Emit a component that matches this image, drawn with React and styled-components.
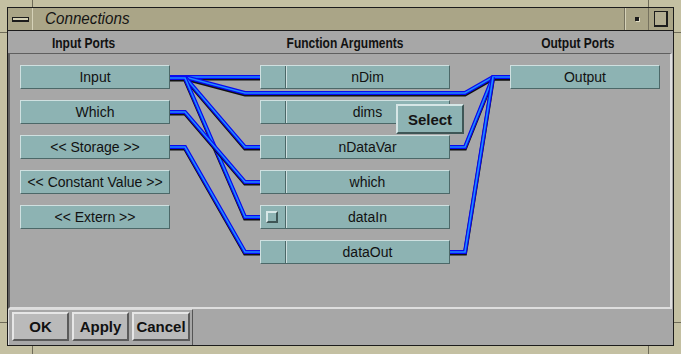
import React from "react";
import styled, { createGlobalStyle } from "styled-components";

const GlobalStyle = createGlobalStyle`
  html, body {
    margin: 0;
    padding: 0;
    background: #c4c0a2;
  }
  * {
    box-sizing: border-box;
  }
`;

const FRAME = "#c4c0a2";
const TICK = "#6e6b58";

const Window = styled.div`
  width: 681px;
  height: 354px;
  padding: 7px 7px 8px 7px;
  display: flex;
  font-family: "Liberation Sans", Arial, sans-serif;
  background:
    linear-gradient(${TICK}, ${TICK}) 32px 0 / 1px 7px no-repeat,
    linear-gradient(${TICK}, ${TICK}) 648px 0 / 1px 7px no-repeat,
    linear-gradient(${TICK}, ${TICK}) 32px 346px / 1px 8px no-repeat,
    linear-gradient(${TICK}, ${TICK}) 648px 346px / 1px 8px no-repeat,
    linear-gradient(${TICK}, ${TICK}) 0 32px / 7px 1px no-repeat,
    linear-gradient(${TICK}, ${TICK}) 0 322px / 7px 1px no-repeat,
    linear-gradient(${TICK}, ${TICK}) 674px 32px / 7px 1px no-repeat,
    linear-gradient(${TICK}, ${TICK}) 674px 322px / 7px 1px no-repeat,
    ${FRAME};
`;

const Inner = styled.div`
  flex: 1;
  display: flex;
  flex-direction: column;
  border: 1px solid #1c1c1c;
`;

const TitleBar = styled.div`
  height: 23px;
  display: flex;
  background: #aaa587;
  border-bottom: 1px solid #1c1c1c;
`;

const TitleButton = styled.div`
  width: ${p => p.$w}px;
  display: flex;
  align-items: center;
  justify-content: center;
  border-left: ${p => (p.$left ? "1px solid #76725e" : "none")};
  border-right: ${p => (p.$right ? "1px solid #76725e" : "none")};
  box-shadow: ${p => (p.$left ? "inset 1px 0 0 #d6d2b8" : "none")};
`;

const MenuSlab = styled.div`
  width: 17px;
  height: 5px;
  background: #d4d0b4;
  border: 1px solid #1c1c1c;
  border-bottom-width: 2px;
`;

const MinDot = styled.div`
  width: 4px;
  height: 4px;
  background: #1c1c1c;
  box-shadow: 1px 1px 0 #e0dcc4;
`;

const MaxBox = styled.div`
  width: 14px;
  height: 16px;
  border: 1px solid #1c1c1c;
  border-right-width: 2px;
  border-bottom-width: 2px;
  background: #b3ae92;
`;

const Title = styled.div`
  flex: 1;
  padding-left: 13px;
  display: flex;
  align-items: center;
  font-style: italic;
  font-size: 16px;
  color: #141414;
  box-shadow: inset 1px 0 0 #d6d2b8;

  span {
    display: inline-block;
    transform: scaleX(0.95);
    transform-origin: left center;
  }
`;

const Body = styled.div`
  flex: 1;
  display: flex;
  flex-direction: column;
  background: #a7a7a7;
`;

const HeaderRow = styled.div`
  height: 22px;
  display: flex;
  align-items: center;
`;

const Header = styled.div`
  width: ${p => p.$w}px;
  text-align: center;
  font-weight: 700;
  font-size: 15px;
  color: #111;

  span {
    display: inline-block;
    transform: scaleX(0.8);
  }
`;

const Panel = styled.div`
  position: relative;
  height: 256px;
  margin-right: 1px;
  padding: 11px 10px 10px 10px;
  border: solid;
  border-color: #5f5f5f #dedede #dedede #5f5f5f;
  border-width: 1px 2px 2px 2px;
`;

const Wires = styled.svg`
  position: absolute;
  left: 0;
  top: 0;
  width: 100%;
  height: 100%;
  pointer-events: none;
`;

const Columns = styled.div`
  position: relative;
  display: flex;
  align-items: flex-start;
`;

const Column = styled.div`
  width: ${p => p.$w}px;
  margin-right: ${p => p.$gap || 0}px;
  display: flex;
  flex-direction: column;
  gap: 11px;
`;

const PortButton = styled.div`
  height: 24px;
  display: flex;
  align-items: center;
  justify-content: center;
  background: #8db3b3;
  border: 1px solid;
  border-color: #cfe0e0 #4c6868 #4c6868 #cfe0e0;
  font-size: 14px;
  color: #111;
`;

const ArgButton = styled(PortButton)`
  justify-content: flex-start;
`;

const Slot = styled.div`
  width: 25px;
  height: 100%;
  display: flex;
  align-items: center;
  padding-left: 5px;
  border-right: 1px solid #4c6868;
  box-shadow: 1px 0 0 #cfe0e0;
`;

const Check = styled.div`
  width: 12px;
  height: 12px;
  background: #8db3b3;
  border: 2px solid;
  border-color: #d8e8e8 #3e5656 #3e5656 #d8e8e8;
`;

const ArgLabel = styled.div`
  flex: 1;
  text-align: center;
`;

const SelectPopup = styled.div`
  position: absolute;
  left: 386px;
  top: 50px;
  width: 68px;
  height: 30px;
  display: flex;
  align-items: center;
  justify-content: center;
  background: #8db3b3;
  border: 2px solid;
  border-color: #d6e6e6 #3e5656 #3e5656 #d6e6e6;
  font-weight: 700;
  font-size: 15px;
  color: #141414;
`;

const Footer = styled.div`
  flex: 1;
  display: flex;
`;

const ButtonGroup = styled.div`
  display: flex;
  gap: 3px;
  padding: 2px 2px 3px 3px;
  border-top: 1px solid #dadada;
  border-left: 1px solid #dadada;
  border-right: 1px solid #555;
`;

const DialogButton = styled.button`
  width: ${p => p.$w}px;
  height: 29px;
  padding: 0;
  background: #bababa;
  border: 2px solid;
  border-color: #e6e6e6 #5a5a5a #5a5a5a #e6e6e6;
  font-family: "Liberation Sans", Arial, sans-serif;
  font-weight: 700;
  font-size: 15px;
  color: #111;
`;

const Wire = ({ d }) => (
  <g fill="none" strokeLinejoin="miter">
    <path d={d} stroke="#111" strokeWidth="4" transform="translate(0 1.5)" />
    <path d={d} stroke="#0a0af0" strokeWidth="4" />
    <path d={d} stroke="#1e8cff" strokeWidth="1.6" />
  </g>
);

const wires = [
  "M170 77 H260",
  "M170 77 H185 L245 93 H465 L493 77 H510",
  "M170 77 H185 L245 147 H260",
  "M170 78 H185 L245 217 H260",
  "M170 112 H185 L245 182 H260",
  "M170 147 H185 L245 252 H260",
  "M450 147 H465 L493 77 H510",
  "M450 252 H465 L493 77",
];

const inputs = ["Input", "Which", "<< Storage >>", "<< Constant Value >>", "<< Extern >>"];
const args = ["nDim", "dims", "nDataVar", "which", "dataIn", "dataOut"];

export default function App() {
  return (
    <>
      <GlobalStyle />
      <Window>
        <Inner>
          <TitleBar>
            <TitleButton $w={24}>
              <MenuSlab />
            </TitleButton>
            <Title><span>Connections</span></Title>
            <TitleButton $w={25} $left $right>
              <MinDot />
            </TitleButton>
            <TitleButton $w={24}>
              <MaxBox />
            </TitleButton>
          </TitleBar>
          <Body>
            <HeaderRow>
              <Header $w={152}><span>Input Ports</span></Header>
              <Header $w={370}><span>Function Arguments</span></Header>
              <Header $w={96}><span>Output Ports</span></Header>
            </HeaderRow>
            <Panel>
              <Wires>
                <g transform="translate(-10 -54)">
                  {wires.map((d, i) => (
                    <Wire key={`wire-${i}`} d={d} />
                  ))}
                </g>
              </Wires>
              <Columns>
                <Column $w={150} $gap={90}>
                  {inputs.map(name => (
                    <PortButton key={name}>{name}</PortButton>
                  ))}
                </Column>
                <Column $w={190} $gap={60}>
                  {args.map(name => (
                    <ArgButton key={name}>
                      <Slot>{name === "dataIn" && <Check />}</Slot>
                      <ArgLabel>{name}</ArgLabel>
                    </ArgButton>
                  ))}
                </Column>
                <Column $w={150}>
                  <PortButton>Output</PortButton>
                </Column>
              </Columns>
              <SelectPopup>Select</SelectPopup>
            </Panel>
            <Footer>
              <ButtonGroup>
                <DialogButton $w={57}>OK</DialogButton>
                <DialogButton $w={57}>Apply</DialogButton>
                <DialogButton $w={58}>Cancel</DialogButton>
              </ButtonGroup>
            </Footer>
          </Body>
        </Inner>
      </Window>
    </>
  );
}
